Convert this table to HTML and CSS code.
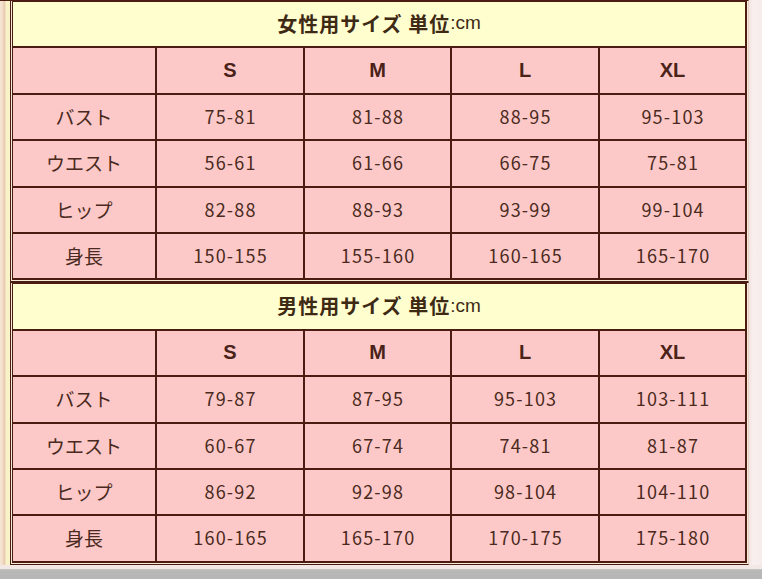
FILE: index.html
```html
<!DOCTYPE html>
<html lang="ja">
<head>
<meta charset="utf-8">
<title>サイズ表</title>
<link rel="stylesheet" href="styles.css">
</head>
<body>
<div class="page">
  <div class="main">
    <div class="strip-left"></div>
    <div class="tables">
      <section class="sheet first">
        <div class="grid">
          <div class="cell title"><b>女性用サイズ 単位</b><span class="unit">:cm</span></div>
          <div class="cell"></div>
          <div class="cell size">S</div>
          <div class="cell size">M</div>
          <div class="cell size">L</div>
          <div class="cell size">XL</div>
          <div class="cell label">バスト</div>
          <div class="cell num">75-81</div>
          <div class="cell num">81-88</div>
          <div class="cell num">88-95</div>
          <div class="cell num">95-103</div>
          <div class="cell label">ウエスト</div>
          <div class="cell num">56-61</div>
          <div class="cell num">61-66</div>
          <div class="cell num">66-75</div>
          <div class="cell num">75-81</div>
          <div class="cell label">ヒップ</div>
          <div class="cell num">82-88</div>
          <div class="cell num">88-93</div>
          <div class="cell num">93-99</div>
          <div class="cell num">99-104</div>
          <div class="cell label">身長</div>
          <div class="cell num">150-155</div>
          <div class="cell num">155-160</div>
          <div class="cell num">160-165</div>
          <div class="cell num">165-170</div>
        </div>
      </section>
      <section class="sheet second">
        <div class="grid">
          <div class="cell title"><b>男性用サイズ 単位</b><span class="unit">:cm</span></div>
          <div class="cell"></div>
          <div class="cell size">S</div>
          <div class="cell size">M</div>
          <div class="cell size">L</div>
          <div class="cell size">XL</div>
          <div class="cell label">バスト</div>
          <div class="cell num">79-87</div>
          <div class="cell num">87-95</div>
          <div class="cell num">95-103</div>
          <div class="cell num">103-111</div>
          <div class="cell label">ウエスト</div>
          <div class="cell num">60-67</div>
          <div class="cell num">67-74</div>
          <div class="cell num">74-81</div>
          <div class="cell num">81-87</div>
          <div class="cell label">ヒップ</div>
          <div class="cell num">86-92</div>
          <div class="cell num">92-98</div>
          <div class="cell num">98-104</div>
          <div class="cell num">104-110</div>
          <div class="cell label">身長</div>
          <div class="cell num">160-165</div>
          <div class="cell num">165-170</div>
          <div class="cell num">170-175</div>
          <div class="cell num">175-180</div>
        </div>
      </section>
    </div>
    <div class="strip-right"></div>
  </div>
  <div class="gap"></div>
  <div class="floor"></div>
</div>
</body>
</html>
```
FILE: styles.css
```css
html, body {
  margin: 0;
  padding: 0;
}

body {
  background: #f6ecea;
  font-family: "Noto Sans CJK JP", "Liberation Sans", sans-serif;
  color: #4a2a20;
}

.page {
  width: 762px;
  height: 579px;
  display: flex;
  flex-direction: column;
  overflow: hidden;
}

.main {
  display: flex;
  align-items: stretch;
}

.strip-left {
  width: 10px;
  flex: none;
  border-top: 1px solid #4b1c12;
  background: linear-gradient(to right, #f6e6d2 0px, #f2dcc8 3px, #e6c6ae 4px, #ecd2b6 5px, #f9f1c8 6px, #faf4c8 10px);
}

.tables {
  display: flex;
  flex-direction: column;
}

.strip-right {
  flex: 1;
  background: linear-gradient(to right, #f3e3e0 0px, #f8efee 4px, #f6ecec 13px);
}

.sheet {
  border: 1px solid #4b1c12;
  border-right-color: #e6cfc2;
  padding: 0 1px 1px 1px;
  background: #f8ead8;
}

.grid {
  display: grid;
  grid-template-columns: 142px 146px 145px 146px 145px;
  grid-auto-rows: 44.4px;
  gap: 2px;
  background: #4b1c12;
  border-style: solid;
  border-color: #4b1c12;
  border-width: 1px 2px 2px 1px;
}

.cell {
  background: #fdc9c8;
  display: flex;
  align-items: center;
  justify-content: center;
  white-space: nowrap;
}

.cell.title {
  grid-column: 1 / -1;
  background: #fefecf;
  font-size: 20px;
  color: #3e2a14;
  padding-bottom: 2px;
}

.title b {
  font-weight: 700;
  letter-spacing: 1px;
}

.title .unit {
  font-family: "Liberation Sans", sans-serif;
  font-weight: 400;
  font-size: 19px;
}

.cell.size {
  font-family: "Liberation Sans", sans-serif;
  font-weight: 700;
  font-size: 20px;
  color: #4a2218;
}

.cell.label {
  font-size: 19px;
  color: #4a2a20;
  padding-bottom: 1px;
}

.cell.num {
  font-size: 18px;
  letter-spacing: 1.2px;
  padding-left: 1.2px;
  padding-bottom: 2px;
  color: #4a2a20;
}

.gap {
  height: 4px;
  background: #f4e8e6;
}

.floor {
  flex: 1;
  background: linear-gradient(to bottom, #c4c4c4 0px, #b7b7b7 2px, #b8b8b8 12px);
}
```
